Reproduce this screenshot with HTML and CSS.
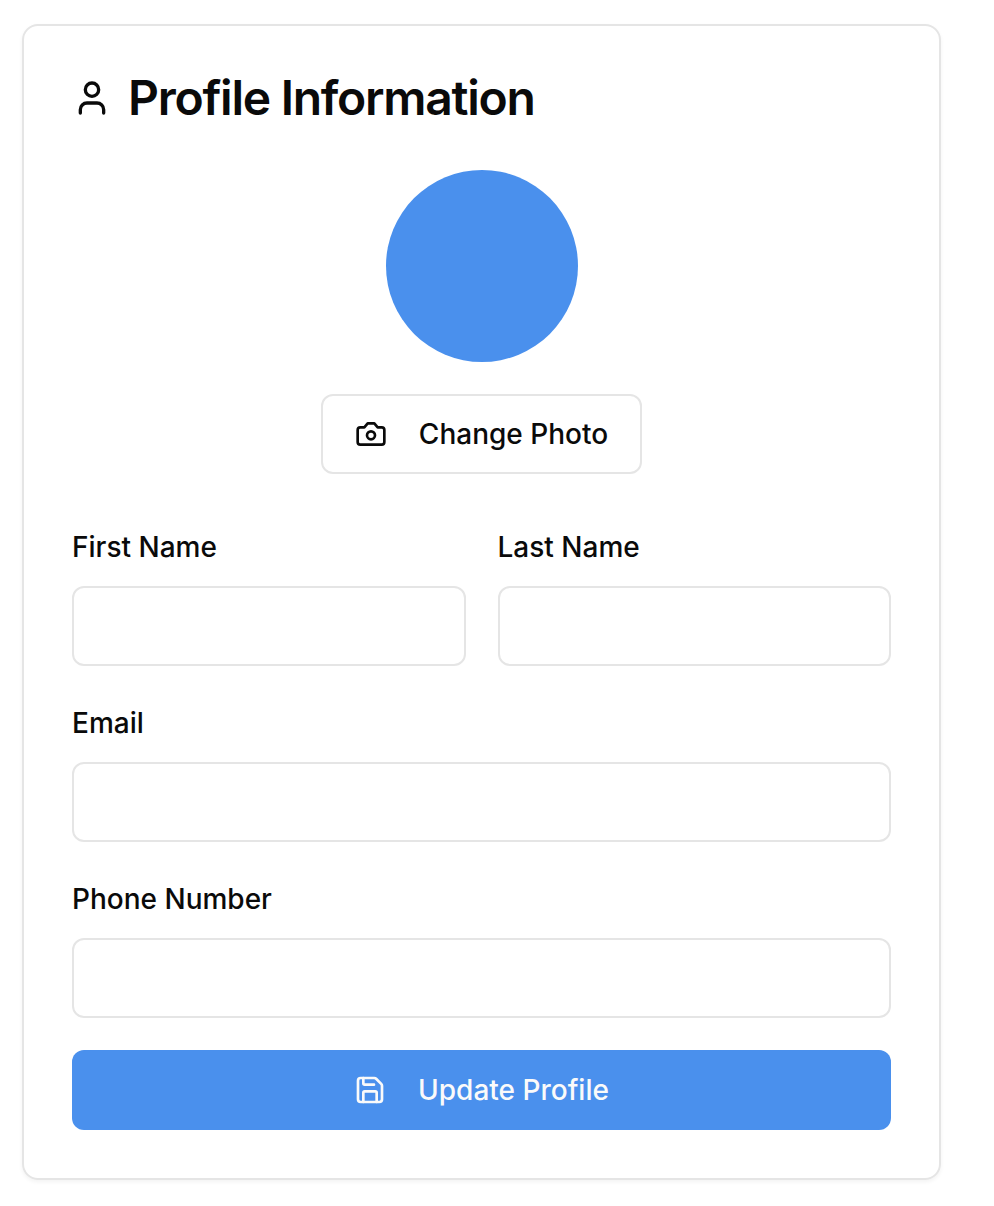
FILE: index.html
```html
<!DOCTYPE html>
<html lang="en">
<head>
<meta charset="utf-8">
<title>Profile Information</title>
<link rel="stylesheet" href="styles.css">
</head>
<body>
<main class="card">
  <h1 class="title">
    <svg class="title-icon" viewBox="0 0 24 24"><path d="M19 21v-2a4 4 0 0 0-4-4H9a4 4 0 0 0-4 4v2"/><circle cx="12" cy="7" r="4"/></svg>
    <span>Profile Information</span>
  </h1>
  <section class="photo">
    <div class="avatar"></div>
    <button class="button outline" type="button">
      <svg class="icon" viewBox="0 0 24 24"><path d="M14.5 4h-5L7 7H4a2 2 0 0 0-2 2v9a2 2 0 0 0 2 2h16a2 2 0 0 0 2-2V9a2 2 0 0 0-2-2h-3l-2.5-3z"/><circle cx="12" cy="13" r="3"/></svg>
      <span>Change Photo</span>
    </button>
  </section>
  <form class="form">
    <div class="row">
      <div class="field"><label for="first">First Name</label><input id="first" type="text"></div>
      <div class="field"><label for="last">Last Name</label><input id="last" type="text"></div>
    </div>
    <div class="field"><label for="email">Email</label><input id="email" type="email"></div>
    <div class="field"><label for="phone">Phone Number</label><input id="phone" type="tel"></div>
    <button class="button primary" type="button">
      <svg class="icon" viewBox="0 0 24 24"><path d="M15.2 3a2 2 0 0 1 1.4.6l3.8 3.8a2 2 0 0 1 .6 1.4V19a2 2 0 0 1-2 2H5a2 2 0 0 1-2-2V5a2 2 0 0 1 2-2z"/><path d="M17 21v-7a1 1 0 0 0-1-1H8a1 1 0 0 0-1 1v7"/><path d="M7 3v4a1 1 0 0 0 1 1h7"/></svg>
      <span>Update Profile</span>
    </button>
  </form>
</main>
</body>
</html>
```
FILE: styles.css
```css
* { box-sizing: border-box; }
body { margin: 0; padding: 24px 22px; background: #fff; color: #0a0a0a; font-family: Inter, sans-serif; }
.card { width: 919px; height: 1156px; padding: 48px 48px 46px; border: 2px solid #e5e5e5; border-radius: 16px; box-shadow: 0 2px 4px rgba(0, 0, 0, .05); }
.title { display: flex; align-items: center; gap: 16px; height: 48px; margin: 0 0 48px; font-size: 48px; line-height: 48px; font-weight: 600; letter-spacing: -1.26px; white-space: nowrap; }
svg { flex: none; fill: none; stroke: currentColor; stroke-width: 2; stroke-linecap: round; stroke-linejoin: round; }
.title-icon { width: 40px; height: 40px; }
.photo { display: flex; flex-direction: column; align-items: center; gap: 32px; }
.avatar { width: 192px; height: 192px; border-radius: 50%; background: #4a90ed; }
.button { display: flex; align-items: center; justify-content: center; gap: 32px; height: 80px; padding: 0; border: 0; border-radius: 12px; font: 500 28px/40px Inter, sans-serif; white-space: nowrap; }
.icon { width: 32px; height: 32px; }
.outline { width: 321px; border: 2px solid #e5e5e5; background: #fff; color: #0a0a0a; }
.primary { width: 100%; background: #4a90ed; color: #fafafa; }
.form { display: flex; flex-direction: column; gap: 32px; margin-top: 48px; }
.row { display: grid; grid-template-columns: 1fr 1fr; gap: 32px; }
.field { display: flex; flex-direction: column; gap: 16px; min-width: 0; }
.field label { height: 48px; font-size: 28px; line-height: 50px; font-weight: 500; }
.field input { width: 100%; height: 80px; padding: 0 24px; border: 2px solid #e5e5e5; border-radius: 12px; background: #fff; font: 28px Inter, sans-serif; }
```
